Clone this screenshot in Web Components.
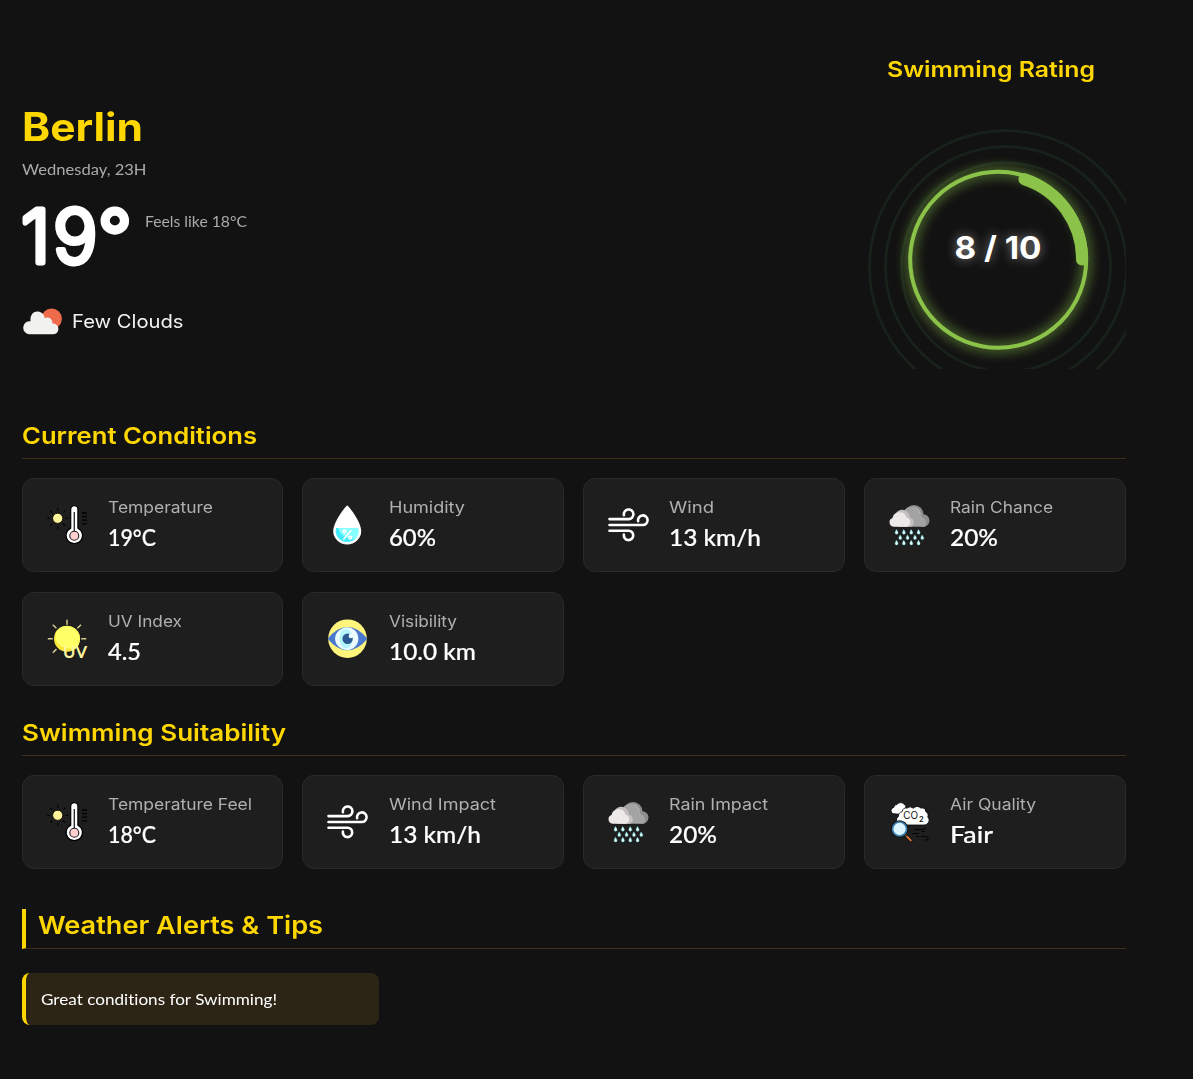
<!DOCTYPE html>
<html lang="en">
<head>
<meta charset="utf-8">
<title>Berlin – Swimming</title>
<style>
body{margin:0;background:#121212;color:#fff;font-family:Inter,"Open Sans",sans-serif}
</style>
</head>
<body>
<weather-app></weather-app>
<script>
const GEO='Inter,"Open Sans",sans-serif', ROUND='Lato,"Open Sans",sans-serif';

/* One line of text, stretched horizontally to a given advance width. */
class FitText extends HTMLElement{
  connectedCallback(){
    const a=n=>this.getAttribute(n);
    const root=this.attachShadow({mode:'open'});
    root.innerHTML=`<style>
      :host{display:block;flex:none;white-space:nowrap;width:${a('w')}px;height:${a('lh')}px;line-height:${a('lh')}px;font-size:${a('size')}px;font-weight:${a('weight')||400};font-family:${a('face')==='round'?ROUND:GEO};font-variant-ligatures:none}
      span{display:inline-block;transform-origin:0 0}
    </style><span><slot></slot></span>`;
    const s=root.querySelector('span');
    s.style.transform=`scaleX(${a('w')/s.getBoundingClientRect().width})`;
  }
}
customElements.define('fit-text',FitText);

const ICONS={
temp:`<g stroke="#000" stroke-width="1.1" stroke-linecap="round"><path d="M10.7 3.2v2M10.7 21.4v2M.6 13.3h2M18.8 13.3h2M3.6 6.2l1.5 1.5M17.8 6.2l-1.5 1.5M3.6 20.4l1.5-1.5M17.8 20.4l-1.5-1.5"/></g><circle cx="10.7" cy="13.3" r="5.1" fill="#fff59a" stroke="#000" stroke-width=".9"/>
<path d="M23.7 4.2a3.6 3.6 0 0 1 7.2 0v18.9a8.2 8.2 0 1 1-7.2 0z" fill="#fff" stroke="#000" stroke-width="1.2"/><path d="M27.3 7v19" stroke="#222" stroke-width="1.3"/><circle cx="27.3" cy="30.7" r="4.5" fill="#ffcfcf" stroke="#1a1a1a" stroke-width="1.1"/><path d="M35 8h5M35 11.6h5M35 15.2h5M35 18.8h5" stroke="#000" stroke-width="1.3"/>`,
drop:`<path d="M19.2.4C20.4.4 33.2 17 33.2 26a14 13.5 0 0 1-28 0C5.200 17 18 .4 19.200.4z" fill="#fff"/><path d="M8.200 23h22.100q.5 1.500.4 3a11.500 11 0 0 1-23 0q0-1.500.5-3z" fill="#8ff"/><path d="M8.200 23q-.5 1.500-.5 3a11.500 11 0 0 0 19.500 7.700Q13 34 10.400 23z" fill="#45ebfa"/><g stroke="#fff" fill="none" stroke-width="1.5" stroke-linecap="round"><path d="M23 25.500l-7.200 8.500"/><circle cx="16.500" cy="26.500" r="1.400"/><circle cx="22.200" cy="32.600" r="1.400"/></g>`,
wind:`<g fill="none" stroke="#fff" stroke-width="2.6" stroke-linecap="round"><path d="M.5 14.100H19.600a4.800 4.800 0 1 0-4.700-3.900"/><path d="M.5 20H33.700a4.800 4.800 0 1 0-4.600-3.800"/><path d="M.5 25.700H19.600a4.700 4.700 0 1 1-4.700 3.900"/></g>`,
rain:`<g fill="#8d8d8d"><circle cx="24" cy="9.500" r="9.500"/><circle cx="33.200" cy="15.500" r="6.300"/></g><path d="M13 8a9.500 9.500 0 0 1 17-2 10 10 0 0 1 1.500 6 6 6 0 0 1 3 9.700H14z" fill="#a3a3a3"/><path d="M25 2.800q4.200 1.800 5.200 6" fill="none" stroke="#b8b8b8"/><path d="M6 8a7.400 7.400 0 0 1 12-.3q2 2 2 5a4.800 4.800 0 0 1 1.200 9H8z" fill="#c4c0c0"/><path d="M3.500 21.700A4.500 4.500 0 0 1 2.500 13 7.200 7.200 0 0 1 16.500 12.600a4.700 4.700 0 0 1 .3 9.100z" fill="#eee9e9"/>`+
 [[27,6.6],[27,13.9],[27,21.300],[27,28.600],[32.300,10.300],[32.300,17.600],[32.300,25],[32.300,32.300],[37.700,6.600],[37.700,13.900],[37.700,21.300],[37.700,28.600]].map(([y,x])=>`<path transform="translate(${x} ${y})" d="M-.2-2.400C.6-1.300 1.500 0 1.500.7a1.500 1.500 0 0 1-3 0C-1.500 0-.7-1.300-.2-2.400z" fill="#dff" stroke="#6cc" stroke-width=".4"/>`).join(''),
uv:`<g stroke="#d3cb8b" stroke-width="1.500"><path d="M20 .700v5M.800 19.700h5M34.200 19.700h5M5.800 5.700l3.600 3.600M34 5.700l-3.600 3.600M5.800 33.700l3.600-3.600"/></g><circle cx="20" cy="19.700" r="13" fill="#fce83a"/><path d="M10 11.600A13 13 0 0 1 33 19.700q-.3 6.800-5 10.200Q12 30 8.500 20q-.5-4 1.500-8.400z" fill="#ffff66"/><g font-family="Lato" font-size="17.500" font-weight="700" fill="#fdf4a0"><text x="16" y="38.900" textLength="24" lengthAdjust="spacingAndGlyphs">UV</text></g>`,
eye:`<circle cx="19.500" cy="19.700" r="19.300" fill="#fff57d"/><path d="M-.3 19.700Q9 8 19.500 8T39.300 19.700Q30 31.300 19.500 31.300T-.3 19.700z" fill="#4a78ce"/><path d="M19.300 8.200a11.300 11.300 0 0 0 0 22.900z" fill="#7debfb"/><path d="M18.900 8.200a11.400 11.400 0 0 1 0 22.900a13 11.500 0 0 1 0-22.900z" fill="#eafcff"/><ellipse cx="18" cy="19.700" rx="6.500" ry="9.800" fill="#b6f4fc"/><circle cx="19.600" cy="19.700" r="5.200" fill="#2b5991"/><circle cx="22.900" cy="17" r="2.300" fill="#eafcff"/>`,
air:`<g fill="#fff" stroke="#000" stroke-width=".8"><path d="M3 11.700a3.300 3.300 0 0 1 .8-6.300Q4 2.500 7 2.600A4.300 4.300 0 0 1 13.800 2q2.500 1 2.300 4l-4 5.200-3 1z"/><path d="M9.500 23a5 5 0 0 1-1-8.700q-.3-3.600 3.600-4.600 1-4.500 5-3.700 3-2.500 6.200.2a5.200 5.200 0 0 1 7.600-.1q4.500-1 5 3.700 3 1.500 1.900 5.200 3 3.500-.6 7-1.500 1.200-4 1z"/></g>
<g font-family="Inter" fill="#111"><text x="13.300" y="17.400" font-size="9.800" textLength="14.800" lengthAdjust="spacingAndGlyphs">CO</text><text x="29" y="19.600" font-size="7.500" font-weight="600">2</text></g>
<g fill="none" stroke="#000" stroke-width=".9"><path d="M24 27.500h9.500q2.500-.3 1.500-2.500M22.500 31.500h6.500M26 34.500h3M31 34.500h5.500q3 1 1 3.500h-3M31.500 29.500h3"/></g><path d="M15.300 32.800l2.300 2.300" stroke="#f3c884" stroke-width="2"/><path d="M17 34.500l4 4.200" stroke="#111" stroke-width="3.500" stroke-linecap="round"/><path d="M17.200 34.700l3.500 3.700" stroke="#d9733a" stroke-width="2" stroke-linecap="round"/><circle cx="9.600" cy="27" r="7" fill="#dcf6ff" stroke="#111" stroke-width="3.600"/><circle cx="9.600" cy="27" r="7" fill="#dcf6ff" stroke="#3d7fae" stroke-width="1.700"/>`
};

class WeatherIcon extends HTMLElement{
  connectedCallback(){
    this.attachShadow({mode:'open'}).innerHTML=`<style>:host{display:block;flex:none;width:40px;height:40px}svg{display:block;overflow:visible}</style><svg width="40" height="40" viewBox="0 0 40 40">${ICONS[this.getAttribute('name')]}</svg>`;
  }
}
customElements.define('weather-icon',WeatherIcon);

class ConditionCard extends HTMLElement{
  connectedCallback(){
    const a=n=>this.getAttribute(n);
    this.attachShadow({mode:'open'}).innerHTML=`<style>
      :host{display:flex;box-sizing:border-box;height:94px;padding:0 24.500px;border:1px solid #2a2a2a;border-radius:12px;background:#1e1e1e;align-items:center;gap:20.600px}
      .label{color:#b0b0b0}
      .value{color:#fff;margin-top:2px;-webkit-text-stroke:.2px #fff}
      .text{padding-bottom:2px}
    </style><weather-icon name="${a('icon')}"></weather-icon>
    <div class="text"><fit-text class="label" size="15.4" lh="24" w="${a('lw')}">${a('label')}</fit-text>
    <fit-text class="value" face="round" size="23.500" weight="500" lh="30" w="${a('vw')}">${a('value')}</fit-text></div>`;
  }
}
customElements.define('condition-card',ConditionCard);

class SectionBlock extends HTMLElement{
  connectedCallback(){
    const a=n=>this.getAttribute(n);
    this.attachShadow({mode:'open'}).innerHTML=`<style>
      :host{display:block}
      header{box-sizing:border-box;height:39px;padding-top:1px;color:#ffd700;border-bottom:1px solid #3d3217}
      .grid{display:grid;grid-template-columns:repeat(4,1fr);gap:20px 19.2px;margin-top:19px}
    </style><header><fit-text size="23.200" weight="600" lh="30" w="${a('w')}">${a('heading')}</fit-text></header><div class="grid"><slot></slot></div>`;
  }
}
customElements.define('section-block',SectionBlock);

class CurrentWeather extends HTMLElement{
  connectedCallback(){
    this.attachShadow({mode:'open'}).innerHTML=`<style>
      :host{display:block;padding-top:102px}
      .city{color:#ffd700}
      .date,.feels{color:#aaa}
      .date{margin-top:7px}
      .now{display:flex;gap:15px;margin-top:12px}
      .deg text{font:300 74px ${GEO};fill:#fff;stroke:#fff;stroke-width:5px;stroke-linejoin:round}
      .feels{margin-top:20px}
      .sky{display:flex;align-items:center;gap:9px;margin-top:27px;color:#f2f2f2}
      .sky fit-text{margin-bottom:2px}
      svg{display:block}
    </style>
    <fit-text class="city" size="39" weight="700" lh="50" w="121">Berlin</fit-text>
    <fit-text class="date" face="round" size="15.600" lh="20" w="124.500">Wednesday, 23H</fit-text>
    <div class="now"><svg class="deg" width="108.600" height="90" viewBox="0 0 108.600 90"><text y="71.500"><tspan x="-1">1</tspan><tspan x="31">9</tspan><tspan x="76">°</tspan></text></svg><fit-text class="feels" face="round" size="15.600" lh="20" w="102">Feels like 18°C</fit-text></div>
    <div class="sky"><svg width="41" height="27" viewBox="0 0 41 27"><circle cx="29.600" cy="10.700" r="10.300" fill="#ee6c4b"/><path d="M7 26.200A6.300 6.300 0 0 1 8.500 13.200C7.500 0 22 1.500 22.800 10.200 26 8.400 30.600 10.500 30.500 15.500c8 0 7.500 10.700 1 10.700z" fill="#f1f1ef"/></svg>
    <fit-text size="18.400" lh="24" w="111.500">Few Clouds</fit-text></div>`;
  }
}
customElements.define('current-weather',CurrentWeather);

class SwimRating extends HTMLElement{
  connectedCallback(){
    this.attachShadow({mode:'open'}).innerHTML=`<style>
      :host{display:block;width:258px;padding-top:55px}
      .title{color:#ffd700;margin-left:19px}
      svg{display:block;margin-top:36px;overflow:hidden}
      text{font:700 31px ${GEO};fill:#fff;text-shadow:0 0 10px rgba(255,255,255,.5)}
    </style>
    <fit-text class="title" size="21.600" weight="600" lh="28" w="208">Swimming Rating</fit-text>
    <svg width="258" height="250" viewBox="868 119 258 250">
      <defs><filter id="g" x="-30%" y="-30%" width="160%" height="160%"><feGaussianBlur stdDeviation="6"/></filter></defs>
      <g fill="none">
        <g stroke="#18221a" stroke-width="2.800"><circle cx="1006" cy="267.200" r="136.500"/><circle cx="1006" cy="267.200" r="120.500"/><circle cx="1006" cy="267.200" r="104.500"/></g>
        <circle cx="998.200" cy="259.800" r="88" stroke="#8bc34a" stroke-width="10" opacity=".5" filter="url(#g)"/>
        <circle cx="998.200" cy="259.800" r="88" stroke="#8bc34a" stroke-width="4"/>
        <path d="M1024.500 179.300A84 84 0 0 1 1082 259.500" stroke="#8bc34a" stroke-width="12" stroke-linecap="round"/>
      </g>
      <text x="954.500" y="258.700" textLength="87" lengthAdjust="spacingAndGlyphs">8 / 10</text>
    </svg>`;
  }
}
customElements.define('swim-rating',SwimRating);

class AlertTips extends HTMLElement{
  connectedCallback(){
    this.attachShadow({mode:'open'}).innerHTML=`<style>
      :host{display:block}
      header{box-sizing:border-box;height:40px;border-left:4px solid #ffd700;border-bottom:1px solid #3d3217;padding:1px 0 0 12px;color:#ffd700}
      .tip{box-sizing:border-box;width:357px;height:52px;margin-top:24px;border-left:4px solid #ffd700;border-radius:8px;background:#2c2414;padding:16px 15px;color:#fff}
    </style>
    <header><fit-text size="24.800" weight="600" lh="30" w="285">Weather Alerts &amp; Tips</fit-text></header>
    <div class="tip"><fit-text face="round" size="15.800" lh="20" w="236"><slot></slot></fit-text></div>`;
  }
}
customElements.define('alert-tips',AlertTips);

class WeatherApp extends HTMLElement{
  connectedCallback(){
    this.attachShadow({mode:'open'}).innerHTML=`<style>
      :host{display:block;box-sizing:border-box;width:1126px;height:1079px;padding-left:21.600px}
      .top{display:flex;justify-content:space-between;height:420px}
      .suit{margin-top:31px}
      alert-tips{margin-top:40px}
    </style>
    <div class="top"><current-weather></current-weather><swim-rating></swim-rating></div>
    <section-block heading="Current Conditions" w="235">
      <condition-card icon="temp" label="Temperature" lw="105" value="19°C" vw="48"></condition-card>
      <condition-card icon="drop" label="Humidity" lw="76" value="60%" vw="47"></condition-card>
      <condition-card icon="wind" label="Wind" lw="45" value="13 km/h" vw="92"></condition-card>
      <condition-card icon="rain" label="Rain Chance" lw="103" value="20%" vw="48"></condition-card>
      <condition-card icon="uv" label="UV Index" lw="74" value="4.5" vw="33"></condition-card>
      <condition-card icon="eye" label="Visibility" lw="68" value="10.0 km" vw="87"></condition-card>
    </section-block>
    <section-block class="suit" heading="Swimming Suitability" w="264">
      <condition-card icon="temp" label="Temperature Feel" lw="144" value="18°C" vw="48"></condition-card>
      <condition-card icon="wind" label="Wind Impact" lw="107" value="13 km/h" vw="92"></condition-card>
      <condition-card icon="rain" label="Rain Impact" lw="99" value="20%" vw="48"></condition-card>
      <condition-card icon="air" label="Air Quality" lw="86" value="Fair" vw="43"></condition-card>
    </section-block>
    <alert-tips>Great conditions for Swimming!</alert-tips>`;
  }
}
customElements.define('weather-app',WeatherApp);
</script>
</body>
</html>
